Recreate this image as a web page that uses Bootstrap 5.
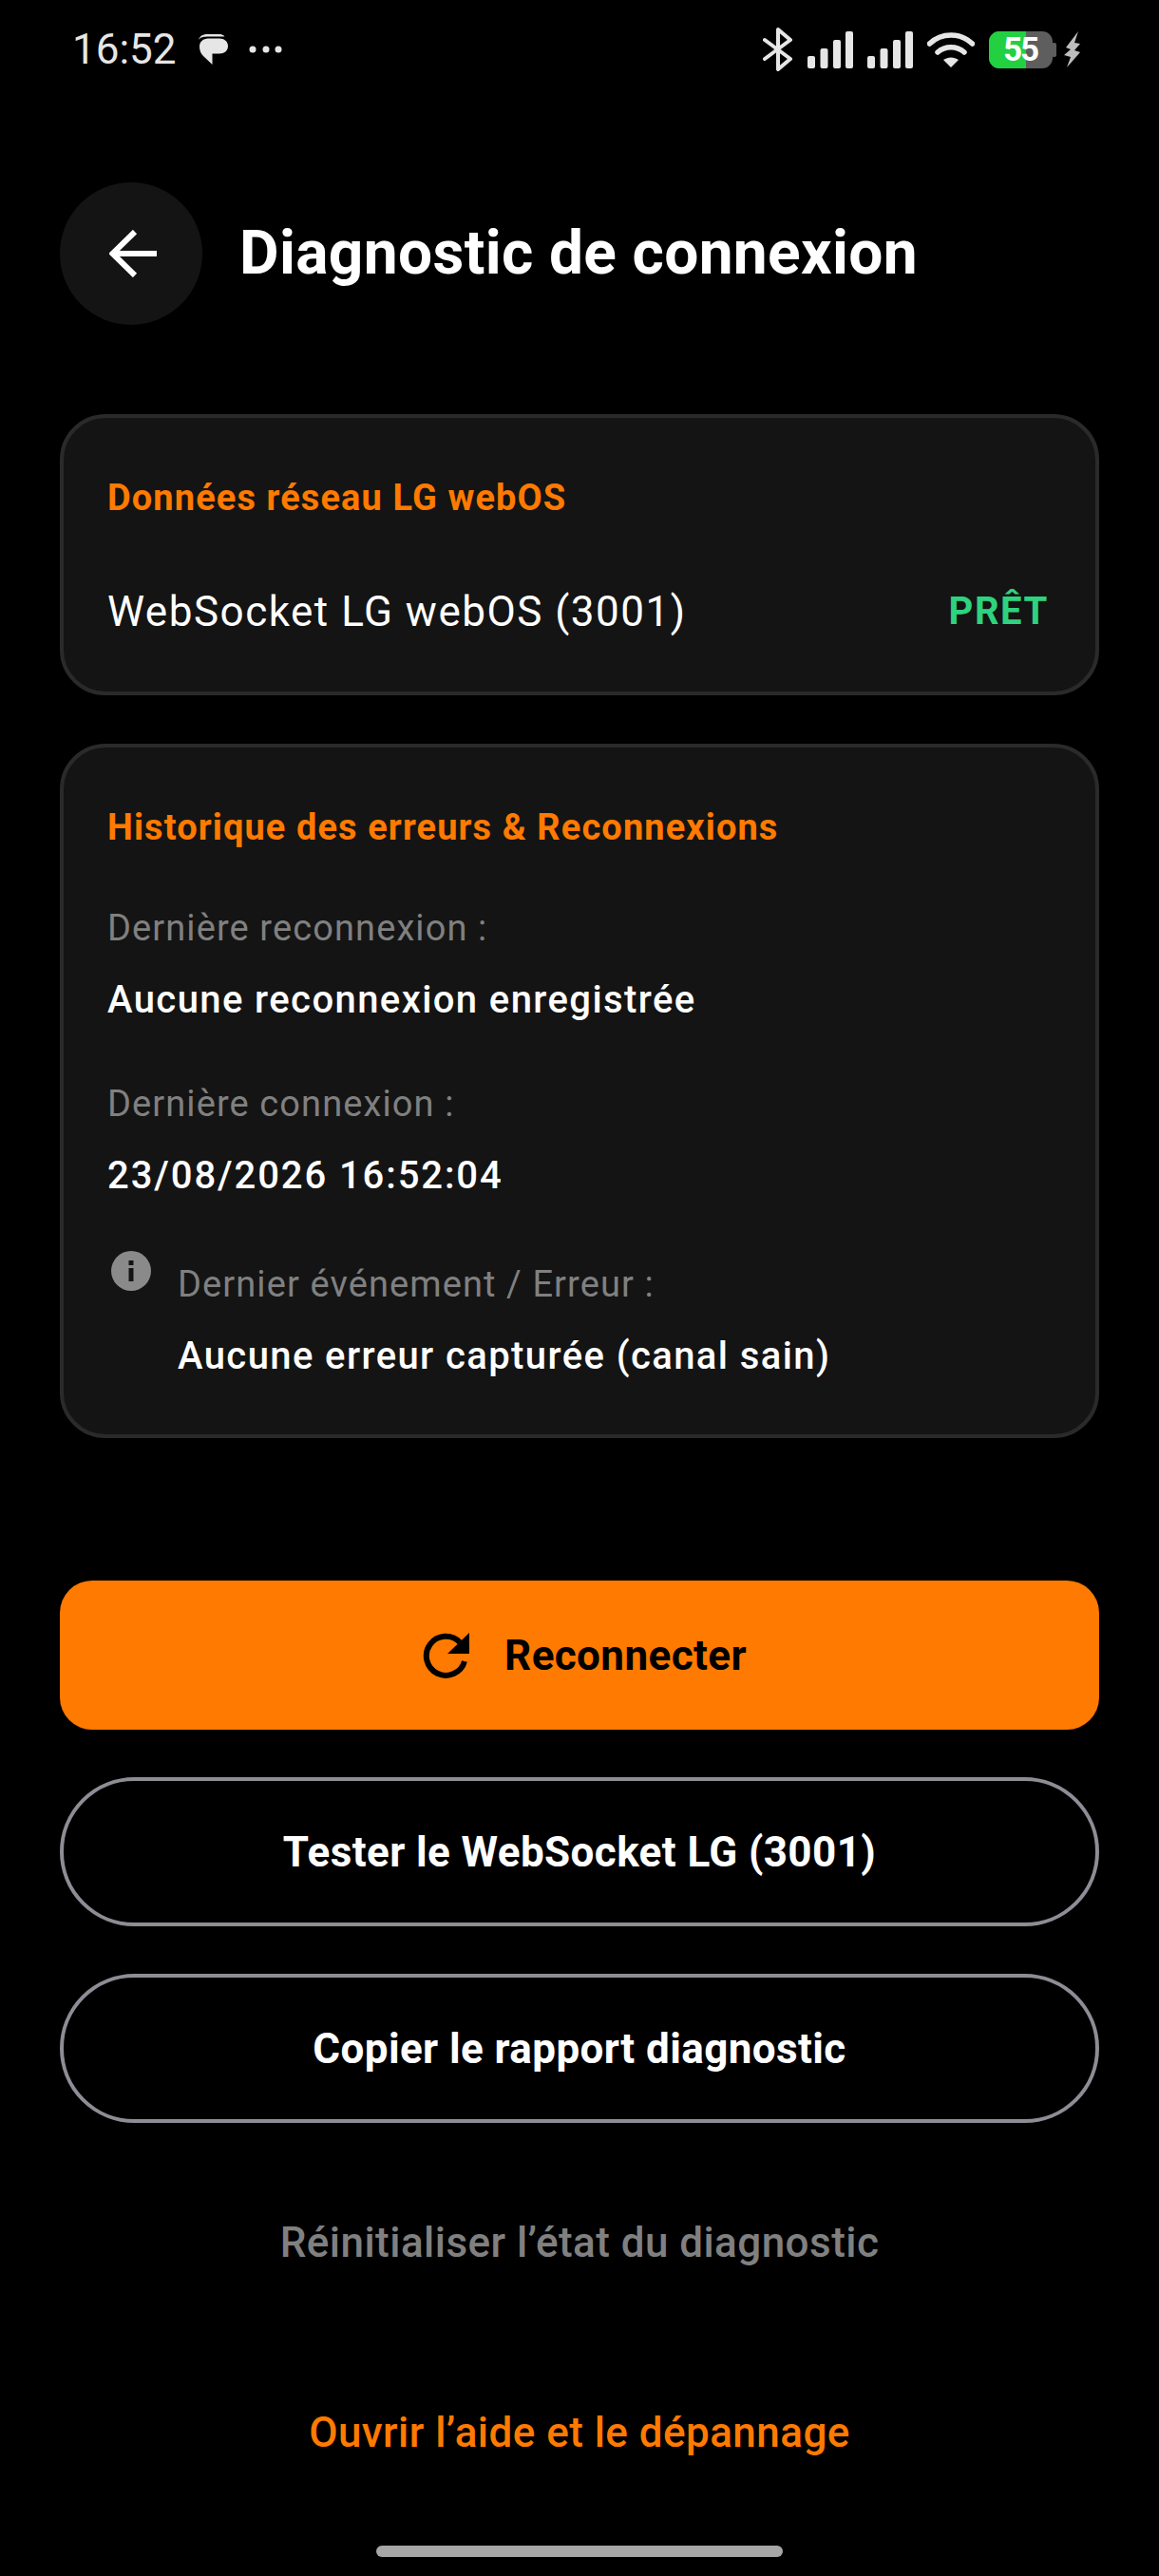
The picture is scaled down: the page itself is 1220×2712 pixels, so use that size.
<!DOCTYPE html>
<html lang="fr">
<head>
<meta charset="UTF-8">
<meta name="viewport" content="width=device-width, initial-scale=1.0">
<title>Diagnostic de connexion</title>
<link href="https://cdn.jsdelivr.net/npm/bootstrap@5.3.3/dist/css/bootstrap.min.css" rel="stylesheet">
<style>
body { background: #000; font-family: Roboto, "Liberation Sans", sans-serif; color: #fff; height: 2712px; overflow: hidden; }
.screen { height: 2712px; }
.statusbar { height: 104px; padding: 0 83px 0 76px; color: #e6e6e6; }
.clock { font-size: 44px; line-height: 1; margin-right: 22px; }
.dots-ico { margin-left: 21px; }
.bar-ico { margin-left: 15px; }
.page-head { margin: 88px 63px 0; height: 150px; gap: 39px; }
.back-btn { width: 150px; height: 150px; background: #141414; border: 0; }
.back-btn svg { margin-left: 4px; }
.page-title { font-size: 64px; font-weight: 700; margin: 0; letter-spacing: .35px; }
.panel { margin: 0 63px; background: #141414; border: 4px solid #2a2a2a; border-radius: 48px; padding: 0 46px; }
.panel-net { margin-top: 94px; height: 296px; padding-top: 60px; }
.panel-log { margin-top: 51px; height: 731px; padding-top: 60px; }
.panel-title { color: #ff7a00; font-size: 38px; line-height: 48px; font-weight: 700; letter-spacing: 1.1px; margin: 0; }
.net-row { margin-top: 68px; line-height: 56px; padding-right: 3px; }
.net-name { font-size: 44px; letter-spacing: 1.5px; }
.net-state { color: #2fd27f; font-size: 40px; font-weight: 700; letter-spacing: 1.6px; }
.log-label { color: #808080; font-size: 38px; line-height: 48px; letter-spacing: 1.1px; }
.log-value { font-size: 40px; line-height: 50px; font-weight: 500; letter-spacing: 1.4px; margin-top: 27px; }
.log-date { letter-spacing: 1.9px; }
.log-first { margin-top: 58px; }
.log-second { margin-top: 60px; }
.log-third { margin-top: 57px; }
.info-ico { margin: -3px 28px 0 4px; flex-shrink: 0; }
.actions { margin: 150px 63px 0; }
.act { display: flex; align-items: center; justify-content: center; width: 100%; height: 157px; font-size: 44px; font-weight: 700; letter-spacing: .4px; }
.act-main, .act-main:active { background: #ff7a00 !important; color: #000 !important; border: 0; border-radius: 34px; gap: 36px; padding-left: 22px; }
.act-line, .act-line:active { background: transparent !important; color: #fff !important; border: 4px solid #8f8c96; border-radius: 79px; margin-top: 50px; }
.link-quiet { color: #808080; font-size: 44px; font-weight: 500; line-height: 56px; letter-spacing: .45px; margin-top: 98px; text-align: center; }
.link-help { color: #ff7a00; font-size: 44px; font-weight: 500; line-height: 56px; letter-spacing: .45px; margin-top: 144px; text-align: center; }
.home-pill { width: 428px; height: 12px; background: #a6a6a6; border-radius: 6px; margin: 91px auto 0; }
.batt-wrap { position: relative; margin-left: 15px; }
.batt { width: 71px; height: 39px; }
.batt-num { position: absolute; left: 15px; top: 0; width: 36px; text-align: center; font-size: 35px; line-height: 39px; font-weight: 700; letter-spacing: -2px; color: #fff; }
</style>
</head>
<body>
<div class="screen d-flex flex-column">
  <div class="statusbar d-flex align-items-center justify-content-between">
    <div class="d-flex align-items-center">
      <span class="clock">16:52</span>
      <svg width="33" height="34" viewBox="0 0 33 34"><path d="M1 7C2.500 2.500 6 1 11 1h11c3 0 5 .5 6.500 2.500H12C6 3.500 3 4 1 7z" fill="#e6e6e6"/><path d="M2 14c0-5 4-8.500 9-8.500h12c5 0 9 3 9 8s-4 8-9 8h-7.500V33L6 24c-2.500-2.500-4-5.500-4-10z" fill="#e6e6e6"/></svg>
      <svg class="dots-ico" width="35" height="12" viewBox="0 0 35 12"><circle cx="4" cy="6" r="3.500" fill="#e6e6e6"/><circle cx="18" cy="6" r="3.500" fill="#e6e6e6"/><circle cx="31" cy="6" r="3.500" fill="#e6e6e6"/></svg>
    </div>
    <div class="d-flex align-items-center">
      <svg width="32" height="46" viewBox="0 0 32 46"><path d="M2 13l27 20-13 11V2l13 11L2 33" fill="none" stroke="#e6e6e6" stroke-width="4" stroke-linejoin="round" stroke-linecap="round"/></svg>
      <svg class="bar-ico" width="48" height="39" viewBox="0 0 48 39"><rect x="0" y="26" width="8" height="13" rx="2" fill="#e6e6e6"/><rect x="13.500" y="18" width="8" height="21" rx="2" fill="#e6e6e6"/><rect x="27" y="9" width="8" height="30" rx="2" fill="#e6e6e6"/><rect x="40" y="0" width="8" height="39" rx="2" fill="#e6e6e6"/></svg>
      <svg class="bar-ico" width="48" height="39" viewBox="0 0 48 39"><rect x="0" y="26" width="8" height="13" rx="2" fill="#e6e6e6"/><rect x="13.500" y="18" width="8" height="21" rx="2" fill="#e6e6e6"/><rect x="27" y="9" width="8" height="30" rx="2" fill="#e6e6e6"/><rect x="40" y="0" width="8" height="39" rx="2" fill="#e6e6e6"/></svg>
      <svg class="bar-ico" width="50" height="37" viewBox="0 0 50 37"><path d="M2.500 12C15 0 35 0 47.500 12" fill="none" stroke="#e6e6e6" stroke-width="5.500" stroke-linecap="round"/><path d="M11 21c8-7 20-7 28 0" fill="none" stroke="#e6e6e6" stroke-width="5.500" stroke-linecap="round"/><path d="M17 29c5-3.500 11-3.500 16 0l-8 8z" fill="#e6e6e6"/></svg>
      <span class="batt-wrap">
        <svg class="batt d-block" viewBox="0 0 71 39"><rect x="0" y="0" width="67" height="39" rx="11" fill="#5e5e5e"/><rect x="66" y="12" width="5" height="15" rx="2" fill="#5e5e5e"/><path d="M11 0h28v39H11A11 11 0 0 1 0 28V11A11 11 0 0 1 11 0z" fill="#22d041"/></svg>
        <span class="batt-num">55</span>
      </span>
      <svg class="ms-2" width="17" height="38" viewBox="0 0 17 38"><path d="M15 0L2 17l5 2-7 6 7 2-4 11L17 22l-6-2 6-7-6-1z" fill="#bdbdbd"/></svg>
    </div>
  </div>

  <div class="page-head d-flex align-items-center">
    <button class="back-btn btn rounded-circle d-flex align-items-center justify-content-center p-0" type="button" aria-label="Retour">
      <svg width="50" height="50" viewBox="0 0 50 50"><path d="M50 25H4M27 2L3.500 25 27 48" fill="none" stroke="#fff" stroke-width="6"/></svg>
    </button>
    <h1 class="page-title">Diagnostic de connexion</h1>
  </div>

  <section class="panel panel-net">
    <h2 class="panel-title">Données réseau LG webOS</h2>
    <div class="net-row d-flex justify-content-between align-items-center">
      <span class="net-name">WebSocket LG webOS (3001)</span>
      <span class="net-state">PRÊT</span>
    </div>
  </section>

  <section class="panel panel-log">
    <h2 class="panel-title">Historique des erreurs &amp; Reconnexions</h2>
    <div class="log-label log-first">Dernière reconnexion :</div>
    <div class="log-value">Aucune reconnexion enregistrée</div>
    <div class="log-label log-second">Dernière connexion :</div>
    <div class="log-value log-date">23/08/2026 16:52:04</div>
    <div class="d-flex log-third">
      <svg class="info-ico" width="42" height="42" viewBox="0 0 42 42"><circle cx="21" cy="21" r="21" fill="#8a8a8a"/><rect x="18.500" y="10" width="5" height="5" fill="#141414"/><rect x="18.500" y="18" width="5" height="14" fill="#141414"/></svg>
      <div>
        <div class="log-label mt-2">Dernier événement / Erreur :</div>
        <div class="log-value">Aucune erreur capturée (canal sain)</div>
      </div>
    </div>
  </section>

  <div class="actions">
    <button class="btn act act-main" type="button">
      <svg width="51" height="50" viewBox="0 0 51 50"><path d="M45 31a20.500 20.500 0 1 1-5-20" fill="none" stroke="#000" stroke-width="6"/><path d="M50 1v22H27z" fill="#000"/></svg>
      Reconnecter
    </button>
    <button class="btn act act-line" type="button">Tester le WebSocket LG (3001)</button>
    <button class="btn act act-line" type="button">Copier le rapport diagnostic</button>
    <div class="link-quiet">Réinitialiser l’état du diagnostic</div>
    <div class="link-help">Ouvrir l’aide et le dépannage</div>
  </div>
  <div class="home-pill"></div>
</div>
</body>
</html>
